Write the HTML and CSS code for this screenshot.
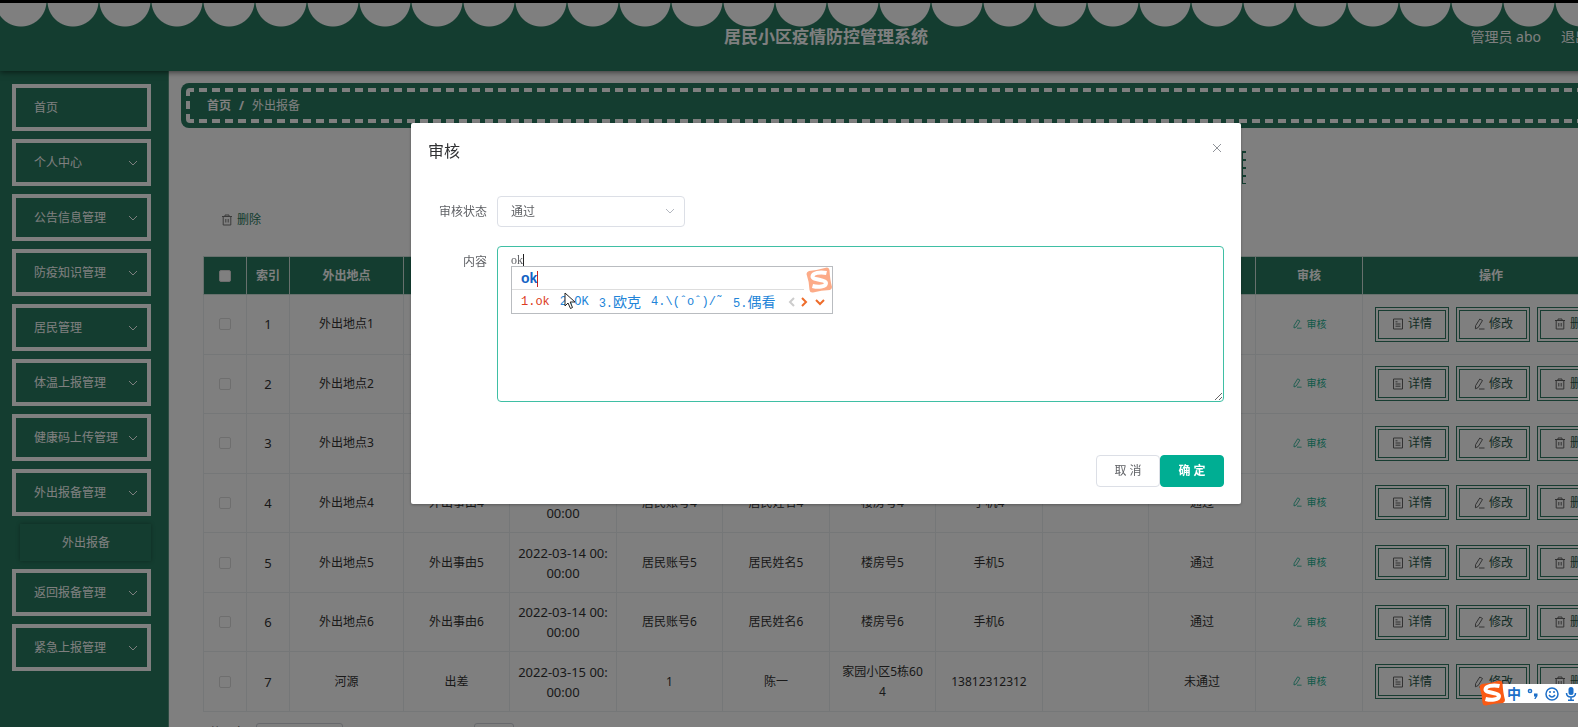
FILE: index.html
```html
<!DOCTYPE html>
<html lang="zh-CN">
<head>
<meta charset="utf-8">
<title>居民小区疫情防控管理系统</title>
<link rel="stylesheet" href="styles.css">
</head>
<body>
<svg class="defs" width="0" height="0">
  <symbol id="down" viewBox="0 0 10 10"><path d="M1 3l4 4 4-4"/></symbol>
  <symbol id="trash" viewBox="0 0 12 12"><path d="M1 2.500h10M4 2.500V1h4v1.500M2.200 2.500v8.500h7.600V2.500M4.800 5v3.500M7.200 5v3.500"/></symbol>
  <symbol id="doc" viewBox="0 0 12 12"><path d="M1.500 1h9v10h-9zM3.500 3.800h2M3.500 6h5M3.500 8.200h5"/></symbol>
  <symbol id="edit" viewBox="0 0 12 12"><path d="M6.800 1l2.700 1.500-4.300 7-2.800 1.300.2-3.100zM6 11h5.500"/></symbol>
  <symbol id="sogou" viewBox="0 0 26 26"><path class="tile" d="M3 4Q12 3 21 .5 23 .5 23.500 3 24 13 26 20 26 22 24 23 15 23 7 25.500 4 26 3.500 23 3 14 .5 7 .5 5 3 4z"/><path class="ess" d="M20.500 6C14 4.500 6.500 6 6.500 9.500c0 4 13 2.500 13.500 6.500 0 4-8 4.500-13.500 3"/></symbol>
</svg>
<div class="app">
  <header class="header">
    <h1 class="brand">居民小区疫情防控管理系统</h1>
    <div class="account"><span>管理员 abo</span><a href="#">退出登录</a></div>
  </header>
  <div class="body">
    <nav class="side">
      <a class="item" href="#">首页</a>
      <a class="item" href="#">个人中心<svg class="chev"><use href="#down"/></svg></a>
      <a class="item" href="#">公告信息管理<svg class="chev"><use href="#down"/></svg></a>
      <a class="item" href="#">防疫知识管理<svg class="chev"><use href="#down"/></svg></a>
      <a class="item" href="#">居民管理<svg class="chev"><use href="#down"/></svg></a>
      <a class="item" href="#">体温上报管理<svg class="chev"><use href="#down"/></svg></a>
      <a class="item" href="#">健康码上传管理<svg class="chev"><use href="#down"/></svg></a>
      <a class="item" href="#">外出报备管理<svg class="chev"><use href="#down"/></svg></a>
      <a class="sub" href="#">外出报备</a>
      <a class="item" href="#">返回报备管理<svg class="chev"><use href="#down"/></svg></a>
      <a class="item" href="#">紧急上报管理<svg class="chev"><use href="#down"/></svg></a>
    </nav>
    <main class="main">
      <div class="crumb"><div class="stitch"><a href="#">首页</a><b>/</b><span>外出报备</span></div></div>
      <div class="banner"></div>
      <div class="tools"><button class="plain"><svg class="ico"><use href="#trash"/></svg>删除</button></div>
      <table class="grid">
        <colgroup><col class="w-s"><col class="w-s"><col class="w-l"><col><col class="w-m"><col><col class="w-m"><col><col class="w-m"><col><col class="w-m"><col class="w-m"><col class="w-op"></colgroup>
        <thead><tr><th><input type="checkbox" aria-label="全选"></th><th>索引</th><th>外出地点</th><th>外出事由</th><th>外出时间</th><th>居民账号</th><th>居民姓名</th><th>楼房号</th><th>手机</th><th>审核回复</th><th>审核状态</th><th>审核</th><th>操作</th></tr></thead>
        <tbody id="rows"></tbody>
      </table>
      <div class="pager"><span class="total">共 7 条</span><select class="size" aria-label="每页条数"><option>10条/页</option></select><input class="jump" aria-label="页码" value="1"></div>
    </main>
  </div>
</div>
<div class="mask">
  <section class="dialog" role="dialog" aria-labelledby="dt">
    <div class="dhead"><h2 id="dt">审核</h2><button class="close" aria-label="关闭"><svg viewBox="0 0 10 10"><path d="M1 1l8 8M9 1L1 9"/></svg></button></div>
    <form class="form">
      <label for="st">审核状态</label>
      <div class="pick"><select id="st"><option>通过</option></select><svg class="chev"><use href="#down"/></svg></div>
      <label for="ct">内容</label>
      <div class="field"><textarea id="ct">ok</textarea><i class="caret"></i>
        <div class="ime">
          <div class="typed"><span>ok</span></div>
          <div class="cands"><span class="hot">1.ok</span><span>2.OK</span><span>3.<em>欧克</em></span><span>4.\(ˆoˆ)/˜</span><span>5.<em>偶看</em></span>
            <svg class="arrows" viewBox="0 0 38 10"><path class="off" d="M6 1L2 5l4 4"/><path d="M14 1l4 4-4 4M28 3l4 4 4-4"/></svg></div>
          <svg class="logo"><use href="#sogou"/></svg>
          <svg class="mouse" viewBox="0 0 12 18"><path d="M1 1v13l3-3 2.500 5.500 2-1L6.200 10H11z"/></svg>
        </div>
      </div>
    </form>
    <div class="dfoot"><button class="cancel">取 消</button><button class="ok">确 定</button></div>
  </section>
</div>
<div class="bezel"></div>
<div class="imebar">
  <svg class="logo"><use href="#sogou"/></svg>
  <span class="zh">中</span>
  <svg class="punct" viewBox="0 0 12 12"><circle cx="3" cy="3" r="1.600"/><path class="fill" d="M7 5.500h3.500V8L8.500 11H7.200L8.500 8.500H7z"/></svg>
  <svg class="face" viewBox="0 0 14 14"><circle cx="7" cy="7" r="6"/><path d="M4 8q3 4 6 0M5 4v2M9 4v2"/></svg>
  <svg class="mic" viewBox="0 0 12 14"><rect class="fill" x="3.500" y="0" width="5" height="8" rx="2.500"/><path d="M1.500 6q0 4 4.500 4t4.500-4M6 10v3M3 13.200h6"/></svg>
</div>
<script src="app.js"></script>
</body>
</html>
```
FILE: app.js
```js
const rows = [];
for (let i = 1; i <= 6; i++) {
  rows.push(['外出地点' + i, '外出事由' + i, '2022-03-14 00:00:00', '居民账号' + i, '居民姓名' + i, '楼房号' + i, '手机' + i, '', '通过']);
}
rows.push(['河源', '出差', '2022-03-15 00:00:00', '1', '陈一', '家园小区5栋604', '13812312312', '', '未通过']);
const icon = name => `<svg class="ico"><use href="#${name}"/></svg>`;
document.getElementById('rows').innerHTML = rows.map((r, i) => `<tr>
  <td><input type="checkbox" aria-label="选择第${i + 1}行"></td><td class="num">${i + 1}</td>
  ${r.map((c, k) => `<td${k === 2 ? ' class="num"' : ''}>${c}</td>`).join('')}
  <td><button class="audit">${icon('edit')}审核</button></td>
  <td><div class="ops"><button>${icon('doc')}详情</button><button>${icon('edit')}修改</button><button>${icon('trash')}删除</button></div></td>
</tr>`).join('');
```
FILE: styles.css
```css
* { box-sizing: border-box; }
:root { --green: #287a60; --teal: #00ae93; }
body {
  margin: 0; height: 100vh; overflow: hidden; background: #fff;
  font: 12px/20px "Noto Sans", "Noto Sans CJK SC", sans-serif; color: #606266;
}
button, input, select, textarea { font: inherit; color: inherit; margin: 0; }
button { cursor: pointer; }
a { color: inherit; text-decoration: none; }
svg { fill: none; stroke: currentColor; }
.defs { position: absolute; }
.app { min-width: 1652px; min-height: 100vh; display: flex; flex-direction: column; }

.header {
  display: grid; grid-template-columns: 1fr auto 1fr; align-items: center;
  height: 71px; padding-top: 2px; color: #fff; z-index: 1;
  background: radial-gradient(circle at 26px 1px, #fff 25px, var(--green) 26px) -5px 0 / 52px 100%;
  box-shadow: 0 1px 6px rgba(0, 0, 0, .6);
}
.brand { grid-column: 2; margin: 0; font-size: 17px; line-height: 24px; }
.account { display: flex; justify-content: flex-end; gap: 20px; padding-right: 35px; font-size: 14px; }

.body { flex: 1; display: flex; }
.side {
  flex: none; width: 169px; padding: 13px 17px 0 12px; color: #fff;
  display: flex; flex-direction: column; gap: 8px;
  background: var(--green); border-right: 1px solid #5f9a86;
}
.item {
  display: flex; align-items: center; justify-content: space-between;
  height: 47px; padding: 0 9px 0 18px; border: 4px solid #fff;
}
.chev { width: 10px; height: 10px; }
.sub {
  height: 37px; line-height: 37px; margin-left: 8px; padding-left: 42px;
  box-shadow: 0 0 4px rgba(0, 0, 0, .3);
}

.main { flex: 1; padding: 12px; }
.crumb { padding: 5px; height: 45px; border-radius: 8px; background: var(--green); color: #fff; }
.stitch {
  display: flex; align-items: center; gap: 8px; height: 35px; padding-left: 21px; border-radius: 4px;
  background:
    repeating-linear-gradient(90deg, #fff 0 8px, transparent 8px 13px) top / 100% 4px no-repeat,
    repeating-linear-gradient(90deg, #fff 0 8px, transparent 8px 13px) bottom / 100% 4px no-repeat,
    repeating-linear-gradient(#fff 0 8px, transparent 8px 13px) left / 4px 100% no-repeat;
}
.stitch a { font-weight: bold; }
.banner {
  width: 670px; height: 33px; margin: 23px auto 0;
  background:
    linear-gradient(var(--green), var(--green)) 666px 0 / 1px 100% no-repeat,
    repeating-linear-gradient(var(--green) 0 2px, transparent 2px 8px) right / 4px 100% no-repeat;
}
.tools { padding: 26px 0 0 40px; }
.ico { width: 12px; height: 12px; flex: none; }
.plain { display: flex; align-items: center; gap: 4px; padding: 0; border: 0; background: none; color: var(--green); }
.plain .ico { color: #777; }

.grid {
  table-layout: fixed; border-collapse: collapse; width: 1416px; height: 456px;
  margin: 26px 0 0 22px; text-align: center;
}
.grid col { width: 106px; }
.grid .w-s { width: 43px; }
.grid .w-m { width: 107px; }
.grid .w-l { width: 114px; }
.grid .w-op { width: 257px; }
.grid th, .grid td { padding: 0 10px; border: 1px solid #ebeef0; color: #333; word-break: break-all; }
.grid th { height: 38px; padding: 0 4px; background: var(--green); color: #fff; border-color: #cfe0da; }
.grid td:last-child { padding: 0 12px; }
.grid .num { font-size: 13px; padding: 0 7px; }
.grid input {
  appearance: none; display: block; width: 12px; height: 12px; margin: auto;
  border: 1px solid #dcdcdc; border-radius: 2px; background: #fff;
}
.audit { display: inline-flex; align-items: center; gap: 5px; padding: 0; border: 0; background: none; color: #1fb394; font-size: 10px; }
.audit .ico { width: 10px; height: 10px; }
.ops { display: flex; gap: 7px; color: #28584a; }
.ops button {
  display: flex; align-items: center; justify-content: center; gap: 4px; flex: none;
  width: 74px; height: 35px; padding: 0; border: 4px double #2f7862; background: none;
}
.ops .ico { color: #666; }
.pager { display: flex; align-items: flex-start; padding: 11px 0 0 28px; }
.total { width: 47px; }
.size { width: 87px; height: 28px; margin-right: 131px; border: 1px solid #d0d3da; border-radius: 3px; background: #fff; }
.jump { width: 40px; height: 28px; border: 1px solid #d0d3da; border-radius: 3px; text-align: center; }

.mask { position: fixed; inset: 0; z-index: 2; background: rgba(0, 0, 0, .5); }
.dialog {
  width: 830px; margin: 123px auto 0; position: relative; left: 37px; padding-bottom: 17px;
  background: #fff; border-radius: 2px; box-shadow: 0 1px 3px rgba(0, 0, 0, .3);
}
.dhead { display: flex; justify-content: space-between; align-items: flex-start; padding: 16px 19px 0 17px; }
.dhead h2 { margin: 0; font-size: 16px; line-height: 24px; font-weight: normal; color: #303133; }
.close { width: 10px; height: 10px; margin-top: 4px; padding: 0; border: 0; background: none; color: #909399; display: flex; }
.form { display: grid; grid-template-columns: 48px 1fr; column-gap: 10px; row-gap: 19px; padding: 33px 17px 0 28px; }
.form label { text-align: right; line-height: 31px; }
.pick { position: relative; width: 188px; height: 31px; }
.pick select { appearance: none; width: 100%; height: 100%; padding: 0 13px; border: 1px solid #dcdfe6; border-radius: 4px; background: #fff; }
.pick .chev { position: absolute; right: 10px; top: 10px; color: #b4b8c0; }
.field { position: relative; display: flex; }
.field textarea {
  width: 100%; height: 156px; padding: 5px 13px; border: 1px solid #3fbfa4; border-radius: 4px; outline: 0;
  font: 12px/16px "Liberation Serif", serif; resize: vertical;
}
.caret { position: absolute; left: 26px; top: 8px; width: 1px; height: 12px; background: #222; }
.ime {
  position: absolute; left: 14px; top: 20px; width: 322px; height: 48px;
  background: #fff; border: 1px solid #b9bcc0; color: #2184d8;
}
.typed { height: 23px; padding-left: 9px; margin-right: 28px; border-bottom: 1px solid #ddd; }
.typed span { display: inline-block; height: 16px; margin-top: 4px; font: bold 14px/15px "Liberation Sans", sans-serif; color: #1462c4; border-right: 1px solid #c22; }
.cands {
  display: flex; align-items: center; gap: 10px; height: 24px; padding: 0 6px 0 9px; white-space: nowrap;
  font: 12px/20px "Liberation Mono", "Noto Sans CJK SC", monospace;
}
.cands em { font: 14px/20px "Noto Sans CJK SC", sans-serif; }
.hot { color: #dc3b22; }
.arrows { flex: none; width: 38px; height: 10px; margin-left: auto; color: #ee6c2a; stroke-width: 2; }
.arrows .off { color: #ccc; stroke: #ccc; }
.logo { position: absolute; width: 26px; height: 26px; }
.tile { fill: #fa5a14; stroke: none; }
.ess { stroke: #fff; stroke-width: 4; }
.ime .logo { right: 0; top: 0; opacity: .5; }
.mouse { position: absolute; left: 52px; top: 25px; width: 12px; height: 18px; fill: #fff; stroke: #222; }
.dfoot { display: flex; justify-content: flex-end; padding: 53px 17px 0; }
.dfoot button { width: 64px; height: 32px; padding: 0; border: 1px solid #dcdfe6; border-radius: 4px; background: #fff; }
.dfoot .ok { background: var(--teal); border-color: var(--teal); color: #fff; font-weight: bold; }

.bezel { position: fixed; inset: 0 0 auto; height: 3px; z-index: 3; background: #000; }
.imebar {
  position: fixed; right: 0; bottom: 24px; z-index: 3; width: 94px; height: 19px; padding-left: 23px;
  display: flex; align-items: center; gap: 6px; background: #fff; color: #1d6fc8;
}
.imebar .logo { left: -5px; top: -4px; width: 26px; height: 26px; }
.imebar svg { flex: none; stroke-width: 1.5; }
.imebar .ess { stroke-width: 4; }
.zh { font-size: 14px; font-weight: bold; }
.punct { width: 12px; height: 12px; }
.face { width: 14px; height: 14px; }
.mic { width: 12px; height: 14px; }
.fill { fill: currentColor; stroke: none; }
```
